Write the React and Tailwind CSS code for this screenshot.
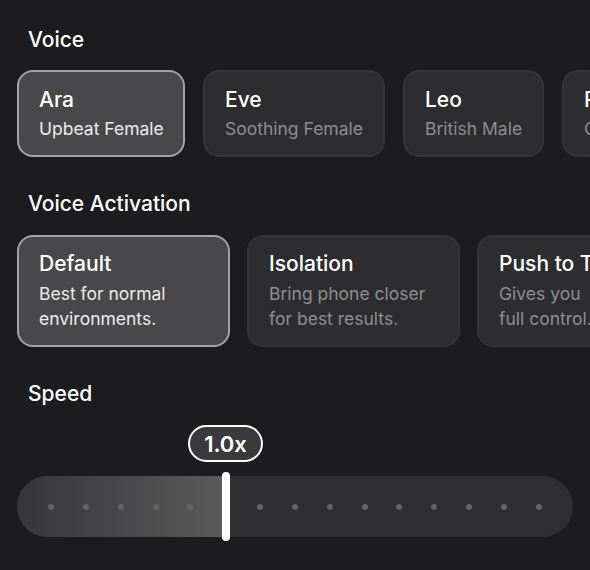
import { useState } from 'react';

const voices = [
  { name: 'Ara', desc: 'Upbeat Female', w: 'w-[168px]' },
  { name: 'Eve', desc: 'Soothing Female', w: 'w-[182px]' },
  { name: 'Leo', desc: 'British Male', w: 'w-[141px]' },
  { name: 'Rex', desc: 'Calm Male', w: 'w-[130px]' },
];

const modes = [
  { name: 'Default', desc: ['Best for normal', 'environments.'] },
  { name: 'Isolation', desc: ['Bring phone closer', 'for best results.'] },
  { name: 'Push to Talk', desc: ['Gives you', 'full control.'] },
];

function Card({ selected, className, children, onClick }) {
  return (
    <div
      role="button"
      onClick={onClick}
      className={
        'shrink-0 flex flex-col justify-start rounded-[16px] cursor-pointer ' +
        (selected
          ? 'bg-[#48484a] border-2 border-[#a3a3a5] '
          : 'bg-[#2d2d2f] border-2 border-[#353537] ') +
        className
      }
    >
      {children}
    </div>
  );
}

export default function App() {
  const [voice, setVoice] = useState(0);
  const [mode, setMode] = useState(0);
  const dots = Array.from({ length: 15 });

  return (
    <div
      className="h-[570px] w-[590px] overflow-hidden bg-[#1c1c1e] text-white"
      style={{ fontFamily: 'Inter, "Noto Sans", sans-serif' }}
    >
      {/* Voice */}
      <h2 className="pl-[28px] pt-[26px] text-[21px] leading-[28px] font-medium">Voice</h2>
      <div className="mt-[16px] flex gap-[18px] pl-[17px]">
        {voices.map((v, i) => (
          <Card
            key={v.name}
            selected={voice === i}
            onClick={() => setVoice(i)}
            className={v.w + ' h-[87px] pl-[20px] pt-[15px]'}
          >
            <div className="text-[21px] leading-[26px] font-medium whitespace-nowrap">{v.name}</div>
            <div
              className={
                'mt-[5px] text-[17.5px] leading-[22px] whitespace-nowrap ' +
                (voice === i ? 'text-[#ececec]' : 'text-[#8e8e93]')
              }
            >
              {v.desc}
            </div>
          </Card>
        ))}
      </div>

      {/* Voice Activation */}
      <h2 className="mt-[33px] pl-[28px] text-[21px] leading-[28px] font-medium">Voice Activation</h2>
      <div className="mt-[17px] flex gap-[17px] pl-[17px]">
        {modes.map((m, i) => (
          <Card
            key={m.name}
            selected={mode === i}
            onClick={() => setMode(i)}
            className="w-[213px] h-[112px] pl-[20px] pt-[14px]"
          >
            <div className="text-[21px] leading-[26px] font-medium whitespace-nowrap">{m.name}</div>
            <div
              className={
                'mt-[4px] text-[17.5px] leading-[25px] whitespace-nowrap ' +
                (mode === i ? 'text-[#ececec]' : 'text-[#8e8e93]')
              }
            >
              {m.desc.map(l => (
                <div key={l}>{l}</div>
              ))}
            </div>
          </Card>
        ))}
      </div>

      {/* Speed */}
      <h2 className="mt-[33px] pl-[28px] text-[21px] leading-[28px] font-medium">Speed</h2>
      <div className="relative mt-[12px] ml-[17px] w-[556px] h-[120px]">
        {/* value pill */}
        <div className="absolute left-[171px] top-[5px] flex h-[37px] w-[75px] items-center justify-center rounded-full border-2 border-white bg-[#3a3a3c] text-[22px] font-semibold leading-none">
          1.0x
        </div>
        {/* track */}
        <div className="absolute left-0 top-[56px] h-[61px] w-[556px] overflow-hidden rounded-full bg-[#2f2f31]">
          <div className="absolute left-0 top-0 h-full w-[209px] bg-gradient-to-r from-[#363638] to-[#5b5b5c]" />
          <div className="absolute inset-0 flex items-center justify-between px-[31px]">
            {dots.map((_, i) => (
              <span key={i} className="relative h-[6px] w-[6px] rounded-full bg-[#646466]" />
            ))}
          </div>
        </div>
        {/* thumb */}
        <div className="absolute left-[205px] top-[52px] h-[69px] w-[8px] rounded-full bg-white" />
      </div>
    </div>
  );
}
